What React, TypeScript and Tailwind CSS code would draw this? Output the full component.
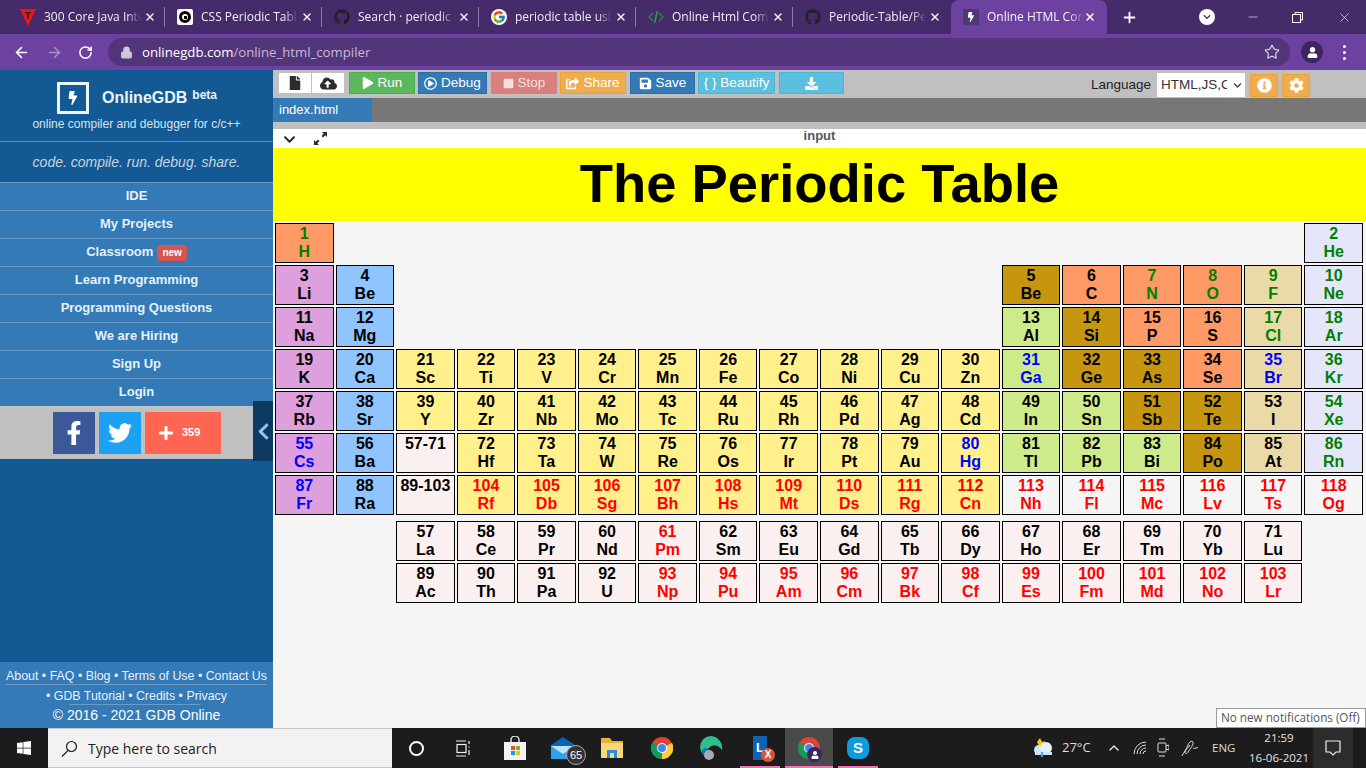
import React from 'react';
import { ArrowLeft, ArrowRight, RotateCw, Lock, Star, Plus, X, Minus, ChevronUp } from 'lucide-react';
import {
  FaFacebookF, FaTwitter, FaPlus, FaPlay, FaStop, FaShareSquare, FaSave, FaDownload, FaInfoCircle, FaCog,
  FaChevronDown, FaFile, FaCloudUploadAlt, FaGithub, FaWindows, FaUser, FaBolt, FaChevronLeft, FaRegPlayCircle,
} from 'react-icons/fa';
import { FcGoogle } from 'react-icons/fc';

const bgs: Record<string, string> = {
  nm: 'bg-[#ff9966]',
  al: 'bg-[#dda0dd]',
  ae: 'bg-[#90c4ff]',
  tm: 'bg-[#fff08c]',
  md: 'bg-[#c6960f]',
  pt: 'bg-[#cdeb8b]',
  ha: 'bg-[#e9daa8]',
  ng: 'bg-[#e6e6fa]',
  la: 'bg-[#fbf0f0]',
  un: 'bg-[#f5f5f5]',
};

const inks: Record<string, string> = {
  k: 'text-black',
  g: 'text-[#008000]',
  b: 'text-[#0000ff]',
  r: 'text-[#ff0000]',
};

// "number symbol kind ink"; an empty string is a free slot
const e = (n: number) => Array(n).fill('');

const rows: string[] = [
  '1 H nm g', ...e(16), '2 He ng g',
  '3 Li al k', '4 Be ae k', ...e(10), '5 Be md k', '6 C nm k', '7 N nm g', '8 O nm g', '9 F ha g', '10 Ne ng g',
  '11 Na al k', '12 Mg ae k', ...e(10), '13 Al pt k', '14 Si md k', '15 P nm k', '16 S nm k', '17 Cl ha g', '18 Ar ng g',
  '19 K al k', '20 Ca ae k', '21 Sc tm k', '22 Ti tm k', '23 V tm k', '24 Cr tm k', '25 Mn tm k', '26 Fe tm k', '27 Co tm k', '28 Ni tm k', '29 Cu tm k', '30 Zn tm k', '31 Ga pt b', '32 Ge md k', '33 As md k', '34 Se nm k', '35 Br ha b', '36 Kr ng g',
  '37 Rb al k', '38 Sr ae k', '39 Y tm k', '40 Zr tm k', '41 Nb tm k', '42 Mo tm k', '43 Tc tm k', '44 Ru tm k', '45 Rh tm k', '46 Pd tm k', '47 Ag tm k', '48 Cd tm k', '49 In pt k', '50 Sn pt k', '51 Sb md k', '52 Te md k', '53 I ha k', '54 Xe ng g',
  '55 Cs al b', '56 Ba ae k', '57-71 _ la k', '72 Hf tm k', '73 Ta tm k', '74 W tm k', '75 Re tm k', '76 Os tm k', '77 Ir tm k', '78 Pt tm k', '79 Au tm k', '80 Hg tm b', '81 Tl pt k', '82 Pb pt k', '83 Bi pt k', '84 Po md k', '85 At ha k', '86 Rn ng g',
  '87 Fr al b', '88 Ra ae k', '89-103 _ la k', '104 Rf tm r', '105 Db tm r', '106 Sg tm r', '107 Bh tm r', '108 Hs tm r', '109 Mt tm r', '110 Ds tm r', '111 Rg tm r', '112 Cn tm r', '113 Nh un r', '114 Fl un r', '115 Mc un r', '116 Lv un r', '117 Ts un r', '118 Og un r',
];

const series: string[] = [
  ...e(2), '57 La la k', '58 Ce la k', '59 Pr la k', '60 Nd la k', '61 Pm la r', '62 Sm la k', '63 Eu la k', '64 Gd la k', '65 Tb la k', '66 Dy la k', '67 Ho la k', '68 Er la k', '69 Tm la k', '70 Yb la k', '71 Lu la k', '',
  ...e(2), '89 Ac la k', '90 Th la k', '91 Pa la k', '92 U la k', '93 Np la r', '94 Pu la r', '95 Am la r', '96 Cm la r', '97 Bk la r', '98 Cf la r', '99 Es la r', '100 Fm la r', '101 Md la r', '102 No la r', '103 Lr la r', '',
];

const Cell = ({ spec }: { spec: string }) => {
  if (!spec) return <div />;
  const [num, sym, kind, ink] = spec.split(' ');
  return (
    <div className={`h-[40px] border border-black text-center text-[16px] leading-[18px] font-bold pt-[1px] ${bgs[kind]} ${inks[ink]}`}>
      <div>{num}</div>
      {sym !== '_' && <div>{sym}</div>}
    </div>
  );
};

const tabs = [
  { title: '300 Core Java Interview', icon: <svg width="16" height="18" viewBox="0 0 16 18"><path d="M0 1h16L8 18z" fill="#f01414" /><path d="M5 4h6v1.500H8.800V11H7.200V5.500H5z" fill="#222" /></svg> },
  { title: 'CSS Periodic Table', icon: <span className="w-[16px] h-[16px] bg-white rounded-[2px] flex items-center justify-center"><span className="w-[12px] h-[12px] rounded-full border-[3px] border-black bg-white flex items-center justify-center"><span className="w-[3px] h-[3px] bg-black" /></span></span> },
  { title: 'Search · periodic table', icon: <FaGithub size={16} className="text-[#24202b]" /> },
  { title: 'periodic table using html', icon: <span className="w-[16px] h-[16px] rounded-full bg-white flex items-center justify-center"><FcGoogle size={14} /></span> },
  { title: 'Online Html Compiler', icon: <svg width="16" height="16" viewBox="0 0 16 16" fill="none" stroke="#1d8a3a" strokeWidth="1.500"><path d="M5 4 1 8l4 4M11 4l4 4-4 4" /><path d="M9.500 2 6.500 14" stroke="#2e9e4a" /></svg> },
  { title: 'Periodic-Table/Periodic', icon: <FaGithub size={16} className="text-[#24202b]" /> },
];

const Tab = ({ title, icon, last }: { title: string; icon: React.ReactNode; last: boolean }) => (
  <div className="relative w-[157px] h-[34px] flex items-center pl-[12px] shrink-0">
    <span className="w-[16px] h-[18px] flex items-center justify-center shrink-0">{icon}</span>
    <span className="ml-[8px] w-[97px] overflow-hidden whitespace-nowrap text-[12px] text-[#f1edf6] [mask-image:linear-gradient(to_right,black_85%,transparent)]">{title}</span>
    <X size={12} strokeWidth={3} className="ml-[3px] text-[#f3f0f7]" />
    {!last && <span className="absolute right-0 top-[7px] h-[20px] w-px bg-[#8a7aa3]" />}
  </div>
);

const tools = [
  { label: 'Run', w: 'w-[66px] ml-[5px]', color: 'bg-[#5cb85c] border-[#4cae4c] text-white', icon: <FaPlay size={12} /> },
  { label: 'Debug', w: 'w-[69px] ml-[3px]', color: 'bg-[#337ab7] border-[#2e6da4] text-white', icon: <FaRegPlayCircle size={13} /> },
  { label: 'Stop', w: 'w-[66px] ml-[4px]', color: 'bg-[#d9807e] border-[#d9807e] text-[#f5dede]', icon: <FaStop size={11} /> },
  { label: 'Share', w: 'w-[66px] ml-[3px]', color: 'bg-[#f0ad4e] border-[#eea236] text-white', icon: <FaShareSquare size={13} /> },
  { label: 'Save', w: 'w-[65px] ml-[4px]', color: 'bg-[#337ab7] border-[#2e6da4] text-white', icon: <FaSave size={13} /> },
  { label: '{ } Beautify', w: 'w-[77px] ml-[3px]', color: 'bg-[#5bc0de] border-[#46b8da] text-white', icon: null },
  { label: '', w: 'w-[65px] ml-[4px]', color: 'bg-[#5bc0de] border-[#46b8da] text-white', icon: <FaDownload size={13} /> },
];

const menu = ['IDE', 'My Projects', 'Classroom', 'Learn Programming', 'Programming Questions', 'We are Hiring', 'Sign Up', 'Login'];

const Sidebar = () => (
  <aside className="relative w-[273px] shrink-0 h-full bg-[#135a94] flex flex-col text-white">
    <div className="h-[71px] flex flex-col items-center">
      <div className="flex items-center mt-[12px] h-[32px] w-full pl-[57px]">
        <div className="w-[32px] h-[32px] border-[3px] border-[#eef5fb] flex items-center justify-center">
          <FaBolt size={14} />
        </div>
        <span className="ml-[13px] text-[16px] font-bold text-[#eaf3fa]">OnlineGDB</span>
        <span className="ml-[5px] mb-[6px] text-[12px] font-bold text-[#eaf3fa]">beta</span>
      </div>
      <div className="mt-[1px] text-[12px] leading-[18px] text-[#d5e3ef]">online compiler and debugger for c/c++</div>
    </div>
    <div className="h-[41px] border-t border-[#5f8fb8] pt-[1px] flex items-center justify-center italic text-[14px] text-[#c4d4e2]">code. compile. run. debug. share.</div>
    {menu.map((m) => (
      <div key={m} className="h-[28px] bg-[#337ab7] border-t border-[#6a9cc7] pb-[2px] flex items-center justify-center text-[13px] font-bold text-[#e6f1fa]">
        {m}
        {m === 'Classroom' && <span className="ml-[4px] mt-[2px] px-[5px] h-[16px] rounded-[3px] bg-[#d9534f] text-white text-[10px] leading-[16px]">new</span>}
      </div>
    ))}
    <div className="h-[53px] bg-[#c0c0c0] flex items-center gap-[4px] pl-[53px]">
      <div className="w-[42px] h-[42px] bg-[#3b5998] flex items-center justify-center"><FaFacebookF size={24} className="text-white" /></div>
      <div className="w-[42px] h-[42px] bg-[#1da1f2] flex items-center justify-center"><FaTwitter size={24} className="text-white" /></div>
      <div className="w-[76px] h-[42px] bg-[#ff6550] flex items-center pl-[13px] gap-[8px] text-white">
        <FaPlus size={16} />
        <span className="text-[11px] font-bold">359</span>
      </div>
    </div>
    <div className="absolute left-[253px] top-[331px] w-[20px] h-[60px] bg-[#0d3a60] flex items-center justify-center">
      <FaChevronLeft size={19} className="text-[#8cc4f5]" />
    </div>
    <div className="mt-auto h-[66px] bg-[#337ab7] flex flex-col items-center text-[#e8f1f9] text-[12.400px]">
      <div className="mt-[7px] h-[14px] leading-[14px] whitespace-nowrap">About • FAQ • Blog • Terms of Use • Contact Us</div>
      <div className="w-[261px] h-px bg-[#6a9cc7] mt-[1px]" />
      <div className="mt-[4px] h-[14px] leading-[14px] whitespace-nowrap">• GDB Tutorial • Credits • Privacy</div>
      <div className="w-[131px] h-px bg-[#6a9cc7] mt-[1px] mr-[5px]" />
      <div className="mt-[2px] text-[14px] leading-[16px] text-white">© 2016 - 2021 GDB Online</div>
    </div>
  </aside>
);

const Toolbar = () => (
  <div className="h-[28px] bg-[#c0c0c0] flex items-start pt-[2px] pl-[6px] text-[13.500px]">
    <div className="flex mt-[1px] bg-white h-[20px] w-[65px]">
      <div className="w-[32px] flex items-center justify-center"><FaFile size={14} className="text-[#2c2c2c]" /></div>
      <div className="w-px bg-[#c0c0c0]" />
      <div className="flex-1 flex items-center justify-center"><FaCloudUploadAlt size={17} className="text-[#2c2c2c]" /></div>
    </div>
    {tools.map((t) => (
      <div key={t.label || 'dl'} className={`h-[22px] border flex items-center justify-center gap-[4px] leading-none ${t.w} ${t.color}`}>
        {t.icon}
        {t.label && <span>{t.label}</span>}
      </div>
    ))}
    <span className="ml-auto mt-[4px] leading-[18px] text-[#222]">Language</span>
    <div className="ml-[6px] mt-[1px] w-[88px] h-[24px] bg-white flex items-center pl-[4px] pr-[3px] text-[#333]">
      <span className="w-[66px] overflow-hidden whitespace-nowrap">HTML,JS,CSS</span>
      <FaChevronDown size={9} className="ml-auto text-[#444]" />
    </div>
    <div className="ml-[5px] mt-[2px] w-[28px] h-[23px] bg-[#f0ad4e] border border-[#eea236] flex items-center justify-center text-white"><FaInfoCircle size={15} /></div>
    <div className="ml-[4px] mt-[2px] w-[28px] h-[23px] bg-[#f0ad4e] border border-[#eea236] flex items-center justify-center text-white mr-[56px]"><FaCog size={15} /></div>
  </div>
);

const Workspace = () => (
  <main className="flex-1 h-full bg-[#f5f5f5] flex flex-col min-w-0">
    <Toolbar />
    <div className="h-[24px] bg-[#777777]">
      <div className="w-[99px] h-full bg-[#337ab7] text-white text-[13px] leading-[24px] pl-[6px]">index.html</div>
    </div>
    <div className="h-[7px] bg-[#c0c0c0]" />
    <div className="relative h-[19px] bg-white flex items-center justify-center">
      <FaChevronDown size={13} className="absolute left-[10px] top-[4px] text-[#2c2c2c]" />
      <svg className="absolute left-[40px] top-[2px]" width="15" height="15" viewBox="0 0 15 15" fill="#2c2c2c">
        <path d="M9 1h5v5l-1.700-1.700L10 6.500 8.500 5 10.700 2.700z" />
        <path d="M6 14H1V9l1.700 1.700L5 8.500 6.500 10 4.300 12.300z" />
      </svg>
      <span className="text-[13px] font-bold text-[#555] -mt-[6px]">input</span>
    </div>
    <h1 className="h-[73px] bg-[#ffff00] text-center text-[54.400px] leading-[72px] font-bold text-black">The Periodic Table</h1>
    <div className="pl-[2px] pr-[3px] pt-[2px]">
      <div className="grid grid-cols-18 gap-[2px]">
        {rows.map((s, i) => <Cell key={i} spec={s} />)}
      </div>
      <div className="grid grid-cols-18 gap-[2px] mt-[6px]">
        {series.map((s, i) => <Cell key={i} spec={s} />)}
      </div>
    </div>
  </main>
);

const Taskbar = () => (
  <footer className="relative h-[40px] bg-[#1c1c1c] flex items-center text-[#e8e8e8] shrink-0">
    <div className="w-[48px] flex items-center justify-center"><FaWindows size={16} className="text-white" /></div>
    <div className="w-[344px] h-[40px] bg-[#f2f2f2] border-t border-b border-[#c8c8c8] flex items-center pl-[13px] text-[14px] text-[#222] font-['Open_Sans',sans-serif]">
      <svg width="17" height="17" viewBox="0 0 17 17" fill="none" stroke="#222" strokeWidth="1.200"><circle cx="10.500" cy="6.500" r="5" /><path d="M7 10.500 1 16.500" /></svg>
      <span className="ml-[10px]">Type here to search</span>
    </div>
    <div className="w-[48px] flex justify-center"><span className="w-[15px] h-[15px] rounded-full border-[2px] border-white" /></div>
    <div className="w-[47px] flex justify-center">
      <svg width="16" height="17" viewBox="0 0 16 17" fill="none" stroke="#eee" strokeWidth="1.200"><path d="M0 1h10M0 16h10" /><rect x="1" y="4.500" width="9" height="8" /><path d="M13 1v3M13 6.500v1M13 10v5" /></svg>
    </div>
    <div className="w-[55px] flex justify-center">
      <svg width="24" height="24" viewBox="0 0 24 24"><path d="M8 6V4a4 4 0 0 1 8 0v2" fill="none" stroke="#ddd" strokeWidth="1.500" /><rect x="1" y="6" width="22" height="18" fill="#f2f2f2" /><rect x="8" y="10" width="4" height="4" fill="#f25022" /><rect x="13" y="10" width="4" height="4" fill="#7fba00" /><rect x="8" y="15" width="4" height="4" fill="#00a4ef" /><rect x="13" y="15" width="4" height="4" fill="#ffb900" /></svg>
    </div>
    <div className="relative w-[42px] flex justify-center">
      <svg width="24" height="22" viewBox="0 0 24 22"><path d="M12 0 24 8v14H0V8z" fill="#0a63b5" /><path d="M0 9h24v13H0z" fill="#2aa3e8" /><path d="M0 9 12 17 24 9" fill="#bfe3f7" /></svg>
      <span className="absolute left-[24px] top-[8px] w-[20px] h-[20px] rounded-full bg-[#333] border border-[#aaa] text-[11px] leading-[18px] text-center text-white">65</span>
    </div>
    <div className="w-[56px] flex justify-center">
      <svg width="22" height="20" viewBox="0 0 22 20"><path d="M0 0h9l2 3h11v17H0z" fill="#e5b23b" /><path d="M0 5h22v15H0z" fill="#f8d775" /><path d="M6 12h10v8H6z" fill="#2a8fd6" /><path d="M9 15h4v5H9z" fill="#f8d775" /></svg>
    </div>
    <div className="w-[44px] flex justify-center">
      <svg width="22" height="22" viewBox="0 0 22 22"><circle cx="11" cy="11" r="11" fill="#db4437" /><path d="M11 11 1.500 5.500A11 11 0 0 0 11 22z" fill="#0f9d58" /><path d="M11 11 11 22A11 11 0 0 0 21 6z" fill="#ffcd40" /><circle cx="11" cy="11" r="5" fill="#fff" /><circle cx="11" cy="11" r="4" fill="#4285f4" /></svg>
    </div>
    <div className="relative w-[54px] flex justify-center">
      <svg width="24" height="26" viewBox="0 0 24 26"><path d="M12 1a11 11 0 0 0-9 17c2 4 8 6 12 3-3 0-7-2-6-6 1-4 7-6 11-3 2 1 3 3 3 3A12 12 0 0 0 12 1z" fill="#2fbf8f" /><path d="M3 18c2 5 8 6 12 4-4-1-7-3-6-8 0-2-7-1-6 4z" fill="#1573c4" /></svg>
      <span className="absolute left-[20px] top-[15px] w-[10px] h-[10px] rounded-full bg-[#aaa]" />
    </div>
    <div className="relative w-[40px] h-[40px] ml-[2px] flex items-center justify-center">
      <span className="w-[14px] h-[24px] bg-[#0f62b0] text-white font-bold text-[13px] leading-[24px] text-center">L</span>
      <span className="absolute left-[21px] top-[20px] w-[14px] h-[14px] rounded-full bg-[#d8553a] text-[10px] leading-[14px] text-center font-bold text-white">X</span>
      <span className="absolute left-0 right-0 bottom-0 h-[2px] bg-[#f472b6]" />
    </div>
    <div className="relative w-[48px] h-[40px] ml-[5px] bg-[#4a4a4a] flex items-center justify-center">
      <svg width="22" height="22" viewBox="0 0 22 22"><circle cx="11" cy="11" r="11" fill="#db4437" /><path d="M11 11 1.500 5.500A11 11 0 0 0 11 22z" fill="#0f9d58" /><circle cx="11" cy="11" r="5" fill="#fff" /><circle cx="11" cy="11" r="4" fill="#4285f4" /></svg>
      <span className="absolute left-[22px] top-[19px] w-[15px] h-[15px] rounded-full bg-[#3d2560] flex items-center justify-center"><FaUser size={8} className="text-white" /></span>
      <span className="absolute left-0 right-0 bottom-0 h-[2px] bg-[#f472b6]" />
    </div>
    <div className="relative w-[40px] h-[40px] ml-[5px] flex items-center justify-center">
      <span className="w-[22px] h-[22px] rounded-[8px] bg-[#0f9be0] text-white font-bold text-[15px] leading-[22px] text-center">S</span>
      <span className="absolute left-0 right-0 bottom-0 h-[2px] bg-[#f472b6]" />
    </div>
    <div className="ml-[154px] w-[19px] h-[20px]">
      <svg width="22" height="20" viewBox="0 0 22 20"><path d="M8 0l2 4 3-1-1 3-5 2-2-4z" fill="#f5c518" /><circle cx="7" cy="12" r="5" fill="#cfe4f5" /><circle cx="14" cy="10" r="6" fill="#e4f1fb" /><path d="M3 14h17v3H3z" fill="#cfe4f5" /><path d="M9 14h2v5H9z" fill="#4a9fe0" /></svg>
    </div>
    <span className="ml-[11px] w-[29px] text-[13px] font-['Open_Sans',sans-serif] text-[#ddd] whitespace-nowrap">27°C</span>
    <ChevronUp size={16} className="ml-[15px]" />
    <svg className="ml-[11px]" width="14" height="14" viewBox="0 0 14 14" fill="none" stroke="#ddd" strokeWidth="1"><path d="M1 13A12 12 0 0 1 13 1M4 13a9 9 0 0 1 9-9M7 13a6 6 0 0 1 6-6M10 13a3 3 0 0 1 3-3" /></svg>
    <svg className="ml-[10px]" width="12" height="20" viewBox="0 0 12 20" fill="none" stroke="#ddd" strokeWidth="1"><rect x="1" y="5" width="8" height="9" rx="1" /><path d="M9 8l3-1v5l-3-1M2 1h6M2 18h6" /></svg>
    <svg className="ml-[12px]" width="18" height="18" viewBox="0 0 18 18" fill="none" stroke="#ddd" strokeWidth="1"><path d="M1 17c2-4 4-6 6-11 1-3 4-5 5-3s-3 7-5 10c-1 2-3 2-3 0 1-3 3-4 5-7M12 9c2 1 4 0 5-1" /></svg>
    <span className="ml-[13px] w-[24px] text-[11.500px] font-['Open_Sans',sans-serif] text-[#ddd]">ENG</span>
    <div className="ml-[12px] w-[62px] flex flex-col items-center text-[11.500px] leading-[20px] font-['Open_Sans',sans-serif] text-[#e4e4e4]">
      <span>21:59</span>
      <span className="whitespace-nowrap">16-06-2021</span>
    </div>
    <div className="absolute right-[13px] top-0 w-[40px] h-[40px] bg-[#2c2c2c] flex items-center justify-center">
      <svg width="16" height="17" viewBox="0 0 16 17" fill="none" stroke="#eee" strokeWidth="1.200"><path d="M1 1h14v11h-4l-3 3-3-3H1z" /></svg>
    </div>
    <div className="absolute right-0 -top-[20px] w-[150px] h-[20px] bg-white border border-[#999] text-[11.700px] leading-[17px] pl-[4px] text-[#555] font-['Open_Sans',sans-serif] whitespace-nowrap">No new notifications (Off)</div>
  </footer>
);

export default function App() {
  return (
    <div className="w-[1366px] h-[768px] overflow-hidden flex flex-col font-['Liberation_Sans',Arial,sans-serif]">
      <div className="h-[34px] bg-[#452b69] flex items-center pl-[8px] font-['Open_Sans',sans-serif] shrink-0">
        {tabs.map((t, i) => <Tab key={t.title} title={t.title} icon={t.icon} last={i === tabs.length - 1} />)}
        <div className="w-[156px] h-[34px] ml-[1px] bg-[#6c41a0] rounded-t-[8px] flex items-center pl-[12px] shrink-0">
          <span className="w-[16px] h-[16px] bg-[#4d3a74] flex items-center justify-center"><FaBolt size={10} className="text-white" /></span>
          <span className="ml-[8px] w-[97px] overflow-hidden whitespace-nowrap text-[12px] text-[#f7f4fb] [mask-image:linear-gradient(to_right,black_85%,transparent)]">Online HTML Compiler</span>
          <X size={12} strokeWidth={3} className="text-white" />
        </div>
        <Plus size={17} strokeWidth={2.500} className="ml-[14px] text-white" />
        <span className="ml-[61px] w-[16px] h-[16px] rounded-full bg-white flex items-center justify-center"><FaChevronDown size={8} className="text-[#452b69]" /></span>
        <Minus size={14} strokeWidth={1} className="ml-[31px] text-white" />
        <svg className="ml-[32px]" width="11" height="11" viewBox="0 0 11 11" fill="none" stroke="#fff" strokeWidth="1"><rect x="0.500" y="2.500" width="8" height="8" /><path d="M3 2.500V.5h7.500V8H8.500" /></svg>
        <X size={15} strokeWidth={1} className="ml-[34px] text-white" />
      </div>
      <div className="h-[36px] bg-[#6c41a0] flex items-center pl-[13px] shrink-0">
        <ArrowLeft size={17} strokeWidth={2.200} className="text-white" />
        <ArrowRight size={17} strokeWidth={2.200} className="ml-[16px] text-[#a48fc4]" />
        <RotateCw size={15} strokeWidth={2.400} className="ml-[15px] text-white" />
        <div className="ml-[15px] w-[1182px] h-[28px] rounded-full bg-[#52357a] flex items-center pl-[12px] font-['Open_Sans',sans-serif] text-[13.200px]">
          <Lock size={13} className="text-[#cfc6dc]" fill="#cfc6dc" />
          <span className="ml-[9px] pt-[1px] text-white">onlinegdb.com</span>
          <span className="pt-[1px] text-[#c6b9d8]">/online_html_compiler</span>
          <Star size={16} className="ml-auto mr-[10px] text-[#cfc6dc]" />
        </div>
        <span className="ml-[11px] w-[22px] h-[22px] rounded-full bg-[#3d2560] flex items-center justify-center"><FaUser size={11} className="text-white" /></span>
        <span className="ml-[20px] flex flex-col gap-[3px]">
          <span className="w-[3px] h-[3px] rounded-full bg-white" />
          <span className="w-[3px] h-[3px] rounded-full bg-white" />
          <span className="w-[3px] h-[3px] rounded-full bg-white" />
        </span>
      </div>
      <div className="flex h-[658px] shrink-0">
        <Sidebar />
        <Workspace />
      </div>
      <Taskbar />
    </div>
  );
}
